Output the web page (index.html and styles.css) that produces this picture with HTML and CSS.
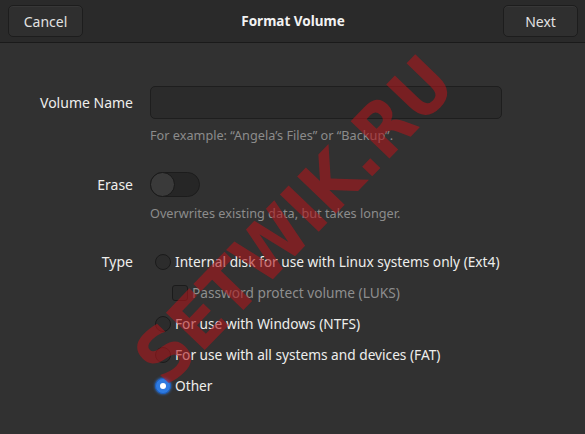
FILE: index.html
```html
<!DOCTYPE html>
<html lang="en">
<head>
    <meta charset="UTF-8">
    <title>Format Volume</title>
    <link rel="stylesheet" href="styles.css">
</head>
<body>
    <header class="headerbar">
        <button class="btn">Cancel</button>
        <h1 class="title">Format Volume</h1>
        <button class="btn">Next</button>
    </header>

    <main class="form">
        <label class="label" for="volname">Volume Name</label>
        <div class="field">
            <input id="volname" class="entry" type="text">
        </div>
        <div></div>
        <p class="hint">For example: “Angela’s Files” or “Backup”.</p>

        <span class="label spaced">Erase</span>
        <div class="field spaced">
            <span class="switch"><span class="knob"></span></span>
        </div>
        <div></div>
        <p class="hint">Overwrites existing data, but takes longer.</p>

        <span class="label label-type">Type</span>
        <ul class="options">
            <li class="option"><span class="radio"></span>Internal disk for use with Linux systems only (Ext4)</li>
            <li class="option sub dim"><span class="check"></span>Password protect volume (LUKS)</li>
            <li class="option"><span class="radio"></span>For use with Windows (NTFS)</li>
            <li class="option"><span class="radio"></span>For use with all systems and devices (FAT)</li>
            <li class="option"><span class="radio on"></span>Other</li>
        </ul>
    </main>

    <div class="watermark">SETWIK.RU</div>
</body>
</html>
```

FILE: styles.css
```css
html, body {
    margin: 0;
    height: 100%;
}
body {
    font-family: "Noto Sans", sans-serif;
    font-size: 14px;
    color: #eeeeec;
    background-color: #313131;
    overflow: hidden;
    position: relative;
}
.headerbar {
    display: flex;
    align-items: center;
    justify-content: space-between;
    height: 42px;
    padding: 0 7px 0 8px;
    background-color: #2a2a2a;
    border-bottom: 1px solid #1a1a1a;
}
.title {
    margin: 0;
    font-size: 13.5px;
    font-weight: bold;
    color: #f2f2f2;
}
.btn {
    font-family: inherit;
    font-size: 14px;
    color: #e2e2e2;
    background-color: #2f2f2f;
    border: 1px solid #1d1d1d;
    border-radius: 5px;
    height: 32px;
    width: 75px;
    padding: 0;
    box-shadow: inset 0 1px 0 rgba(255,255,255,0.04);
}
.form {
    display: grid;
    grid-template-columns: 133px 420px;
    column-gap: 17px;
    align-items: center;
    padding-top: 43px;
}
.label {
    text-align: right;
}
.entry {
    display: block;
    box-sizing: border-box;
    width: 352px;
    height: 33px;
    background-color: #2b2b2b;
    border: 1px solid #1e1e1e;
    border-radius: 5px;
    outline: none;
}
.hint {
    margin: 8px 0 0;
    font-size: 12.7px;
    line-height: 17px;
    color: #8c8c8c;
}
.spaced {
    margin-top: 28px;
}
.switch {
    display: block;
    box-sizing: border-box;
    width: 50px;
    height: 25px;
    border-radius: 13px;
    background-color: #262626;
    border: 1px solid #1c1c1c;
    position: relative;
}
.knob {
    position: absolute;
    left: -1px;
    top: -1px;
    box-sizing: border-box;
    width: 25px;
    height: 25px;
    border-radius: 50%;
    background-color: #3a3a3a;
    border: 1px solid #1a1a1a;
}
.label-type {
    align-self: start;
    margin-top: 24px;
    line-height: 31px;
}
.options {
    list-style: none;
    margin: 24px 0 0;
    padding: 0;
    font-size: 13.7px;
}
.option {
    display: flex;
    align-items: center;
    height: 31px;
    padding-left: 5px;
    white-space: nowrap;
}
.option.sub {
    padding-left: 22px;
}
.dim {
    color: #8e8e8e;
}
.radio, .check {
    box-sizing: border-box;
    width: 16px;
    height: 16px;
    margin-right: 4px;
    background-color: #2c2c2c;
    border: 1px solid #1b1b1b;
    flex: none;
}
.radio {
    border-radius: 50%;
}
.check {
    border-radius: 3px;
}
.radio.on {
    background-color: #2e7ae0;
    border-color: #1b5fc2;
    box-shadow: 0 0 3px #2f7de6;
    position: relative;
}
.radio.on::after {
    content: "";
    position: absolute;
    left: 4px;
    top: 4px;
    width: 6px;
    height: 6px;
    border-radius: 50%;
    background-color: #fff;
}
.watermark {
    position: absolute;
    left: 294px;
    top: 220px;
    font-family: "DejaVu Sans Condensed", "DejaVu Sans", sans-serif;
    font-stretch: condensed;
    font-weight: bold;
    font-size: 74px;
    line-height: 1;
    color: rgba(175, 22, 28, 0.58);
    transform: translate(-50%, -50%) rotate(-46deg);
    white-space: nowrap;
    pointer-events: none;
}
```
